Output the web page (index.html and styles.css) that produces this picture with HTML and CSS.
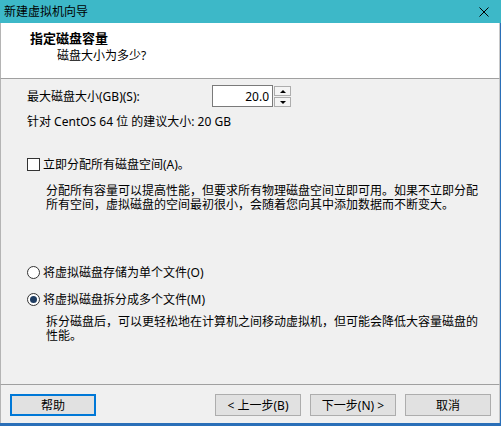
FILE: index.html
```html
<!DOCTYPE html>
<html lang="zh-CN">
<head>
<meta charset="UTF-8">
<title>新建虚拟机向导</title>
<link rel="stylesheet" href="styles.css">
</head>
<body>

<div class="window">
  <div class="titleBar">
    <span class="titleText">新建虚拟机向导</span>
    <svg class="closeIcon" width="10" height="10" viewBox="0 0 10 10">
      <path d="M0.5 0.5 L9.5 9.5 M9.5 0.5 L0.5 9.5" stroke="#000" stroke-width="1" fill="none"/>
    </svg>
  </div>

  <div class="Header">
    <h1>指定磁盘容量</h1>
    <p>磁盘大小为多少?</p>
  </div>

  <div class="Main">
    <div class="sizeRow">
      <label for="diskSize">最大磁盘大小(GB)(S):</label>
      <div class="spinBox">
        <input type="text" id="diskSize" value="20.0">
        <div class="spinButtons">
          <span class="spinBtn"><span class="arrowUp"></span></span>
          <span class="spinBtn"><span class="arrowDown"></span></span>
        </div>
      </div>
    </div>
    <p class="hint">针对 CentOS 64 位 的建议大小: 20 GB</p>

    <div class="option checkRow"><span class="checkbox"></span>立即分配所有磁盘空间(A)。</div>
    <p class="desc">分配所有容量可以提高性能，但要求所有物理磁盘空间立即可用。如果不立即分配<br>所有空间，虚拟磁盘的空间最初很小，会随着您向其中添加数据而不断变大。</p>

    <div class="option radioRow"><span class="radio"></span>将虚拟磁盘存储为单个文件(O)</div>
    <div class="option radioRow second"><span class="radio checked"></span>将虚拟磁盘拆分成多个文件(M)</div>
    <p class="desc descSplit">拆分磁盘后，可以更轻松地在计算机之间移动虚拟机，但可能会降低大容量磁盘的<br>性能。</p>
  </div>

  <div class="Footer">
    <button type="button" class="button focused">帮助</button>
    <div class="navButtons">
      <button type="button" class="button">&lt; 上一步(B)</button>
      <button type="button" class="button">下一步(N) &gt;</button>
      <button type="button" class="button">取消</button>
    </div>
  </div>
</div>

</body>
</html>
```

FILE: styles.css
```css
* {
  box-sizing: border-box;
  padding: 0px;
  margin: 0px;
}

html, body {
  width: 501px;
  height: 426px;
  overflow: hidden;
}

body {
  background-color: #2a6fb8;
  font-family: "Noto Sans", "Noto Sans CJK SC", sans-serif;
  font-size: 12px;
  color: #000;
}

.window {
  width: 501px;
  height: 423px;
  display: flex;
  flex-direction: column;
}

.titleBar {
  height: 23px;
  background-color: #3db8c8;
  display: flex;
  align-items: center;
  justify-content: space-between;
  padding: 0 12px 0 4px;
}

.titleText {
  line-height: 15px;
}

.closeIcon {
  display: block;
}

.Header, .Main, .Footer {
  width: 500px;
  border-left: 1px solid #b4b4b4;
  border-right: 1px solid #c8c8c8;
}

.Header {
  height: 56px;
  background-color: #fff;
  border-bottom: 1px solid #a0a0a0;
  padding: 7px 0 0 29px;
}

.Header h1 {
  font-size: 13px;
  font-weight: bold;
  line-height: 16px;
}

.Header p {
  margin: 2px 0 0 27px;
  line-height: 15px;
}

.Main {
  height: 305px;
  background-color: #f0f0f0;
  padding: 6px 0 0 26px;
}

.sizeRow {
  display: flex;
  align-items: center;
  height: 22px;
}

.sizeRow label {
  width: 185px;
}

.spinBox {
  display: flex;
  height: 22px;
}

.spinBox input {
  width: 61px;
  height: 22px;
  border: 1px solid #7a7a7a;
  background-color: #fff;
  font-family: inherit;
  font-size: 12px;
  text-align: right;
  padding-right: 3px;
  color: #000;
}

.spinButtons {
  width: 18px;
  display: flex;
  flex-direction: column;
  gap: 1px;
  padding: 1px 0 0 1px;
}

.spinBtn {
  flex: 1;
  border: 1px solid #adadad;
  background-color: #f4f4f4;
  display: flex;
  align-items: center;
  justify-content: center;
}

.arrowUp {
  border-left: 3px solid transparent;
  border-right: 3px solid transparent;
  border-bottom: 3px solid #000;
}

.arrowDown {
  border-left: 3px solid transparent;
  border-right: 3px solid transparent;
  border-top: 3px solid #000;
}

.hint {
  margin-top: 7px;
  line-height: 15px;
}

.option {
  display: flex;
  align-items: center;
  line-height: 15px;
}

.checkRow {
  margin-top: 28px;
}

.checkbox {
  width: 13px;
  height: 13px;
  border: 1px solid #333;
  background-color: #fff;
  margin-right: 3px;
}

.desc {
  margin-top: 12px;
  padding-left: 19px;
  line-height: 14px;
}

.radioRow {
  margin-top: 53px;
}

.radioRow.second {
  margin-top: 12px;
}

.radio {
  width: 13px;
  height: 13px;
  border: 1px solid #333;
  border-radius: 50%;
  background-color: #fff;
  margin-right: 3px;
  display: flex;
  align-items: center;
  justify-content: center;
}

.radio.checked::after {
  content: "";
  width: 7px;
  height: 7px;
  border-radius: 50%;
  background-color: #1f3d62;
}

.descSplit {
  margin-top: 8px;
}

.Footer {
  flex: 1;
  background-color: #f0f0f0;
  border-top: 1px solid #a0a0a0;
  padding: 9px 8px 0 9px;
  display: flex;
  justify-content: space-between;
  align-items: flex-start;
}

.navButtons {
  display: flex;
  gap: 9px;
}

.button {
  width: 86px;
  height: 22px;
  border: 1px solid #adadad;
  background-color: #e1e1e1;
  font-family: inherit;
  font-size: 12px;
  color: #000;
}

.button.focused {
  border: 2px solid #0078d7;
}
```
